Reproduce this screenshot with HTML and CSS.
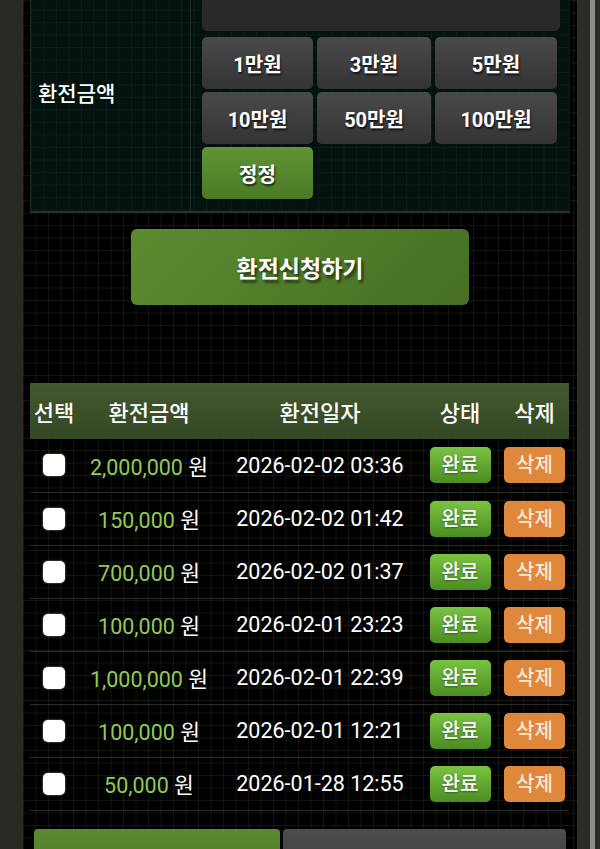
FILE: index.html
```html
<html>
    <head>
        <meta name="viewport" content="width=device-width, initial-scale=1.0">
        <link rel="stylesheet" href="styles.css">
    </head>
    <body>
        <div class="frame">
            <div class="edge"></div>
            <main class="panel">
                <section class="form">
                    <div class="form-label">환전금액</div>
                    <div class="form-field">
                        <div class="amount-input"></div>
                        <div class="chips">
                            <button class="chip">1만원</button>
                            <button class="chip">3만원</button>
                            <button class="chip">5만원</button>
                            <button class="chip">10만원</button>
                            <button class="chip">50만원</button>
                            <button class="chip">100만원</button>
                            <button class="chip chip-reset">정정</button>
                        </div>
                    </div>
                </section>

                <div class="submit-wrap">
                    <button class="submit">환전신청하기</button>
                </div>

                <table class="history">
                    <thead>
                        <tr>
                            <th class="c-check">선택</th>
                            <th class="c-amount">환전금액</th>
                            <th class="c-date">환전일자</th>
                            <th class="c-state">상태</th>
                            <th class="c-del">삭제</th>
                        </tr>
                    </thead>
                    <tbody>
                        <tr>
                            <td><span class="check"></span></td>
                            <td><span class="money">2,000,000</span> 원</td>
                            <td>2026-02-02 03:36</td>
                            <td><span class="badge done">완료</span></td>
                            <td><span class="badge del">삭제</span></td>
                        </tr>
                        <tr>
                            <td><span class="check"></span></td>
                            <td><span class="money">150,000</span> 원</td>
                            <td>2026-02-02 01:42</td>
                            <td><span class="badge done">완료</span></td>
                            <td><span class="badge del">삭제</span></td>
                        </tr>
                        <tr>
                            <td><span class="check"></span></td>
                            <td><span class="money">700,000</span> 원</td>
                            <td>2026-02-02 01:37</td>
                            <td><span class="badge done">완료</span></td>
                            <td><span class="badge del">삭제</span></td>
                        </tr>
                        <tr>
                            <td><span class="check"></span></td>
                            <td><span class="money">100,000</span> 원</td>
                            <td>2026-02-01 23:23</td>
                            <td><span class="badge done">완료</span></td>
                            <td><span class="badge del">삭제</span></td>
                        </tr>
                        <tr>
                            <td><span class="check"></span></td>
                            <td><span class="money">1,000,000</span> 원</td>
                            <td>2026-02-01 22:39</td>
                            <td><span class="badge done">완료</span></td>
                            <td><span class="badge del">삭제</span></td>
                        </tr>
                        <tr>
                            <td><span class="check"></span></td>
                            <td><span class="money">100,000</span> 원</td>
                            <td>2026-02-01 12:21</td>
                            <td><span class="badge done">완료</span></td>
                            <td><span class="badge del">삭제</span></td>
                        </tr>
                        <tr>
                            <td><span class="check"></span></td>
                            <td><span class="money">50,000</span> 원</td>
                            <td>2026-01-28 12:55</td>
                            <td><span class="badge done">완료</span></td>
                            <td><span class="badge del">삭제</span></td>
                        </tr>
                    </tbody>
                </table>

                <div class="tabs">
                    <button class="tab tab-on"></button>
                    <button class="tab"></button>
                </div>
            </main>
            <div class="edge edge-right"><div class="scroll-line"></div></div>
        </div>
    </body>
</html>
```

FILE: styles.css
```css
html, body {
    margin: 0;
    padding: 0;
    height: 100%;
    overflow: hidden;
    background: #272a22;
    font-family: Roboto, "Noto Sans CJK KR", sans-serif;
    color: #fff;
}

div.frame {
    display: flex;
    height: 849px;
}

div.edge {
    width: 23px;
    flex: 0 0 23px;
    background: #272a22;
}

div.edge-right {
    background: #2a2c25;
}

div.scroll-line {
    width: 5px;
    height: 100%;
    margin-left: 13px;
    background: #8c8f8a;
}

main.panel {
    width: 554px;
    flex: 0 0 554px;
    background-color: #000;
    background-image:
        linear-gradient(rgba(70, 90, 50, .25) 1px, transparent 1px),
        linear-gradient(90deg, rgba(70, 90, 50, .25) 1px, transparent 1px);
    background-size: 12.5px 12.5px;
    overflow: hidden;
}

/* amount form */

section.form {
    display: flex;
    margin: -28px 7px 0 7px;
    background-color: #04120f;
    background-image:
        linear-gradient(rgba(40, 70, 60, .18) 1px, transparent 1px),
        linear-gradient(90deg, rgba(40, 70, 60, .18) 1px, transparent 1px);
    background-size: 12.5px 12.5px;
    border-left: 1px solid #1c2a26;
    border-bottom: 2px solid #27342f;
}

div.form-label {
    width: 160px;
    flex: 0 0 160px;
    display: flex;
    align-items: center;
    padding-left: 7px;
    box-sizing: border-box;
    font-size: 21px;
    font-weight: 500;
    border-right: 1px solid #1c2a26;
}

div.form-field {
    flex: 1;
    padding: 0 10px 12px 11px;
}

div.amount-input {
    height: 59px;
    background: #282828;
    border-radius: 0 0 5px 5px;
    margin-bottom: 6px;
}

div.chips {
    display: grid;
    grid-template-columns: 111px 114px 122px;
    grid-auto-rows: 52px;
    gap: 3px 4px;
}

button.chip {
    border: 0;
    border-radius: 5px;
    background: linear-gradient(#4a4a4a, #333);
    color: #fff;
    font-family: Roboto, "Noto Sans CJK KR", sans-serif;
    font-size: 20px;
    font-weight: bold;
    text-shadow: 1px 2px 2px rgba(0, 0, 0, .7);
    padding: 0;
}

button.chip-reset {
    background: linear-gradient(#5f9333, #4b7a27);
}

/* submit */

div.submit-wrap {
    display: flex;
    justify-content: center;
    padding: 16px 0 78px;
}

button.submit {
    width: 338px;
    height: 76px;
    border: 0;
    border-radius: 6px;
    background: linear-gradient(135deg, #5c8b31, #466f22);
    color: #fff;
    font-family: Roboto, "Noto Sans CJK KR", sans-serif;
    font-size: 23px;
    font-weight: bold;
    text-shadow: 2px 3px 3px rgba(0, 0, 0, .6);
}

/* history table */

table.history {
    width: 539px;
    margin: 0 7px;
    border-collapse: collapse;
    table-layout: fixed;
}

table.history th {
    height: 56px;
    padding: 0;
    font-size: 22px;
    font-weight: 500;
    background: linear-gradient(#43582f, #344725);
}

table.history td {
    height: 53px;
    padding: 0;
    text-align: center;
    font-size: 21.5px;
    white-space: nowrap;
    border-bottom: 1px solid #2a2d2a;
}

th.c-check { width: 48px; }
th.c-amount { width: 142px; }
th.c-date { width: 200px; }
th.c-state { width: 80px; }
th.c-del { width: 69px; }

span.check {
    display: inline-block;
    width: 22px;
    height: 22px;
    border-radius: 5px;
    background: #fff;
    vertical-align: middle;
    box-shadow: 0 0 2px rgba(255, 255, 255, .6);
}

span.money {
    color: #8fcc55;
}

span.badge {
    display: inline-block;
    width: 61px;
    height: 36px;
    line-height: 36px;
    border-radius: 5px;
    font-size: 20px;
    font-weight: 500;
    vertical-align: middle;
}

span.done {
    background: linear-gradient(#7ac341, #4b8d22);
    text-shadow: 0 1px 2px rgba(0, 0, 0, .4);
}

span.del {
    background: #df873a;
    color: #fbe9dc;
}

/* bottom tabs */

div.tabs {
    display: flex;
    gap: 3px;
    margin: 18px 11px 0 11px;
}

button.tab {
    flex: 1;
    height: 40px;
    border: 0;
    border-radius: 4px 4px 0 0;
    background: linear-gradient(#4d4d4d, #3e3e3e);
}

button.tab-on {
    flex: 0 0 246px;
    background: linear-gradient(#5a8b30, #4d7a27);
}
```
